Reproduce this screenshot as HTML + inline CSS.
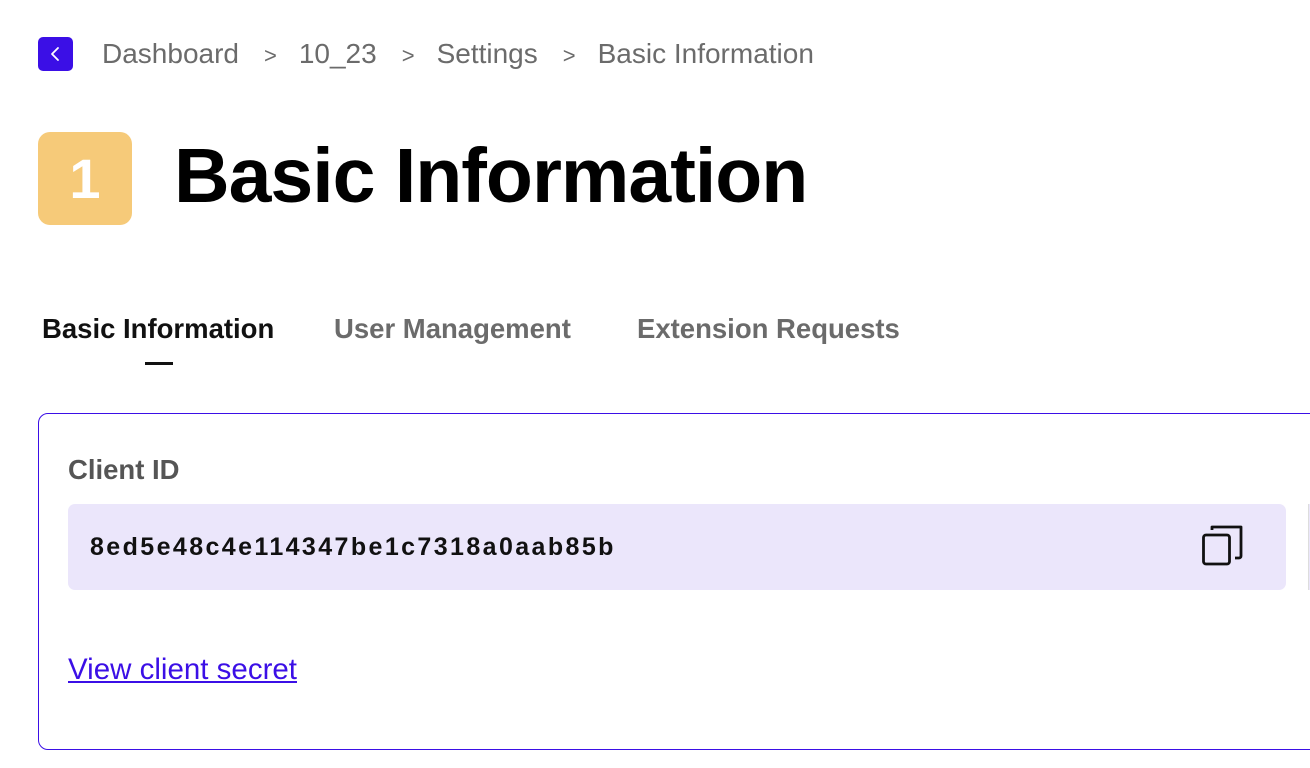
<!DOCTYPE html>
<html><head><style>
body{margin:0;width:1310px;height:768px;overflow:hidden;background:#fff;font-family:"Liberation Sans",sans-serif;position:relative}
.a{position:absolute;white-space:nowrap}
.s{display:inline-block;margin:0 22px 0 25px;font-size:22px}
</style></head><body>
<div class="a" style="left:38px;top:37px;width:35px;height:34px;background:#3b0fe6;border-radius:5px"><svg width="35" height="34"><path d="M20 11 L14 17 L20 23" stroke="#fff" stroke-width="1.8" fill="none" stroke-linecap="round" stroke-linejoin="round"/></svg></div>
<div class="a" style="left:102px;top:38px;font-size:28px;color:#6b6b6b;line-height:32px">Dashboard<span class="s">&gt;</span>10_23<span class="s">&gt;</span>Settings<span class="s">&gt;</span>Basic Information</div>
<div class="a" style="left:38px;top:132px;width:94px;height:93px;background:#f6ca79;border-radius:12px;color:#fff;font-weight:bold;font-size:56px;text-align:center;line-height:93px">1</div>
<div class="a" style="left:174px;top:128px;font-size:77px;font-weight:bold;letter-spacing:-1px;line-height:96px;color:#000">Basic Information</div>
<div class="a" style="left:42px;top:312px;font-size:27.5px;font-weight:bold;color:#111;line-height:34px">Basic Information</div>
<div class="a" style="left:145px;top:362px;width:28px;height:3px;background:#111"></div>
<div class="a" style="left:334px;top:312px;font-size:27.5px;font-weight:bold;color:#6b6b6b;line-height:34px">User Management</div>
<div class="a" style="left:637px;top:312px;font-size:27.5px;font-weight:bold;color:#6b6b6b;line-height:34px">Extension Requests</div>
<div class="a" style="left:38px;top:413px;width:1300px;height:335px;border:1px solid #3b0fe6;border-radius:10px"></div>
<div class="a" style="left:68px;top:454px;font-size:27.5px;font-weight:bold;color:#555;line-height:32px">Client ID</div>
<div class="a" style="left:68px;top:504px;width:1218px;height:86px;background:#ebe6fb;border-radius:7px"></div>
<div class="a" style="left:1308px;top:504px;width:10px;height:86px;background:#ebe6fb;border-left:1px solid #ddd"></div>
<div class="a" style="left:90px;top:532px;font-size:25px;letter-spacing:2.4px;font-weight:bold;color:#111;line-height:30px">8ed5e48c4e114347be1c7318a0aab85b</div>
<svg class="a" style="left:1200px;top:524px" width="46" height="46"><rect x="3.5" y="11" width="26" height="29" rx="2.5" fill="none" stroke="#111" stroke-width="2.8"/><path d="M12 6 V3 H41 V32 a2 2 0 0 1 -2 2 H35" fill="none" stroke="#111" stroke-width="2.8" stroke-linejoin="round"/></svg>
<div class="a" style="left:68px;top:654px;font-size:29.5px;color:#3b0fe6;text-decoration:underline;line-height:32px">View client secret</div>
</body></html>
